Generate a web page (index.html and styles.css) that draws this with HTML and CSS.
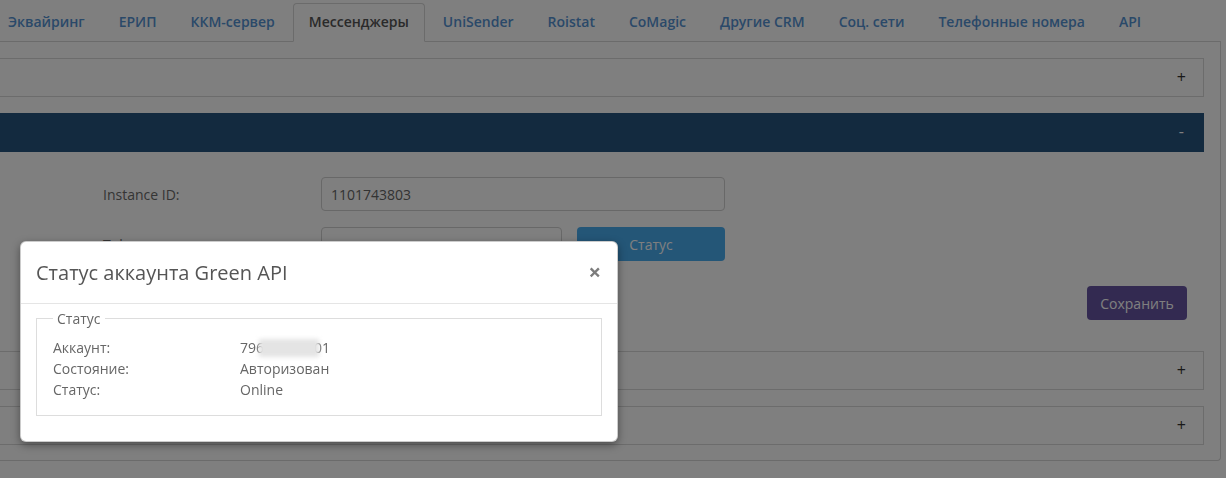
FILE: index.html
```html
<!DOCTYPE html>
<html lang="ru">
<head>
    <meta charset="UTF-8">
    <meta name="viewport" content="width=device-width, initial-scale=1.0">
    <title>Мессенджеры</title>
    <link rel="stylesheet" href="styles.css">
</head>
<body>
    <div class="page">
        <ul class="nav-tabs">
            <li class="tab">Эквайринг</li>
            <li class="tab">ЕРИП</li>
            <li class="tab">ККМ-сервер</li>
            <li class="tab active">Мессенджеры</li>
            <li class="tab">UniSender</li>
            <li class="tab">Roistat</li>
            <li class="tab">CoMagic</li>
            <li class="tab">Другие CRM</li>
            <li class="tab">Соц. сети</li>
            <li class="tab">Телефонные номера</li>
            <li class="tab">API</li>
        </ul>

        <div class="tab-content">
            <div class="panel">
                <div class="panel-heading"><span class="toggle">+</span></div>
            </div>

            <div class="panel open">
                <div class="panel-heading"><span class="toggle">-</span></div>
                <div class="panel-body">
                    <div class="form-row">
                        <label class="form-label">Instance ID:</label>
                        <input class="form-input wide" type="text" value="1101743803">
                    </div>
                    <div class="form-row">
                        <label class="form-label">Token:</label>
                        <input class="form-input short" type="text" value="">
                        <button class="btn btn-status">Статус</button>
                    </div>
                    <div class="form-actions">
                        <button class="btn btn-save">Сохранить</button>
                    </div>
                </div>
            </div>

            <div class="panel">
                <div class="panel-heading"><span class="toggle">+</span></div>
            </div>

            <div class="panel">
                <div class="panel-heading"><span class="toggle">+</span></div>
            </div>
        </div>
    </div>

    <div class="backdrop"></div>

    <div class="modal">
        <div class="modal-header">
            <h4 class="modal-title">Статус аккаунта Green API</h4>
            <span class="close">&times;</span>
        </div>
        <div class="modal-body">
            <fieldset class="status-box">
                <legend>Статус</legend>
                <div class="status-row">
                    <span class="status-label">Аккаунт:</span>
                    <span class="status-value">796<span class="blur"></span>01</span>
                </div>
                <div class="status-row">
                    <span class="status-label">Состояние:</span>
                    <span class="status-value">Авторизован</span>
                </div>
                <div class="status-row">
                    <span class="status-label">Статус:</span>
                    <span class="status-value">Online</span>
                </div>
            </fieldset>
        </div>
    </div>
</body>
</html>
```

FILE: styles.css
```css
* {
    margin: 0;
    padding: 0;
    box-sizing: border-box;
}

body {
    font-family: 'Open Sans', 'Liberation Sans', sans-serif;
    font-size: 14px;
    color: #6e6e6e;
    background-color: #fff;
    width: 1226px;
    height: 478px;
    overflow: hidden;
}

.page {
    margin-left: -60px;
    width: 1281px;
    padding-top: 3px;
}

/* tabs */
.nav-tabs {
    list-style: none;
    display: flex;
    padding-left: 52px;
    border-bottom: 1px solid #d6d6d6;
}

.tab {
    padding: 9px 15px 10px;
    line-height: 18px;
    margin-right: 2px;
    margin-bottom: -1px;
    border: 1px solid transparent;
    border-radius: 4px 4px 0 0;
    font-weight: 600;
    color: #5592d2;
    white-space: nowrap;
}

.tab.active {
    color: #555;
    background-color: #fff;
    border-color: #d6d6d6;
    border-bottom-color: #fff;
}

.tab-content {
    border: 1px solid #d6d6d6;
    border-top: none;
    border-radius: 0 0 4px 4px;
    padding: 16px 16px 15px;
}

/* panels */
.panel {
    border: 1px solid #d8d8d8;
    margin-bottom: 16px;
}

.panel:last-child {
    margin-bottom: 0;
}

.panel-heading {
    display: flex;
    justify-content: flex-end;
    padding: 9px 17px 9px 16px;
    line-height: 19px;
    color: #333;
}

.toggle {
    font-size: 16px;
}

.panel.open {
    border: none;
}

.panel.open .panel-heading {
    background-color: #26547f;
    color: #fff;
    height: 39px;
    padding-right: 20px;
}

.panel-body {
    padding: 25px 17px 15px 146px;
}

.form-row {
    display: flex;
    align-items: center;
    margin-bottom: 16px;
}

.form-label {
    width: 218px;
    color: #6a6a6a;
}

.form-input {
    height: 34px;
    padding: 0 9px;
    border: 1px solid #d0d0d0;
    border-radius: 4px;
    font-family: inherit;
    font-size: 14px;
    color: #666;
    background-color: #fff;
}

.form-input.wide {
    width: 404px;
}

.form-input.short {
    width: 241px;
}

.btn {
    height: 34px;
    border: none;
    border-radius: 4px;
    font-family: inherit;
    font-size: 14px;
    color: #fff;
    cursor: pointer;
}

.btn-status {
    width: 148px;
    margin-left: 15px;
    background-color: #48acef;
}

.form-actions {
    display: flex;
    justify-content: flex-end;
    margin-top: 25px;
}

.btn-save {
    width: 100px;
    background-color: #6654a2;
}

/* modal */
.backdrop {
    position: fixed;
    top: 0;
    left: 0;
    right: 0;
    bottom: 0;
    background-color: rgba(0, 0, 0, 0.5);
}

.modal {
    position: absolute;
    left: 20px;
    top: 241px;
    width: 598px;
    height: 201px;
    background-color: #fff;
    border: 1px solid rgba(0, 0, 0, 0.2);
    border-radius: 6px;
    box-shadow: 0 3px 9px rgba(0, 0, 0, 0.4);
}

.modal-header {
    display: flex;
    justify-content: space-between;
    align-items: center;
    padding: 15px 14px 15px 15px;
    height: 62px;
    border-bottom: 1px solid #e5e5e5;
}

.modal-title {
    font-size: 20px;
    font-weight: 400;
    color: #555;
}

.close {
    font-size: 22px;
    font-weight: 700;
    color: #7c7c7c;
    line-height: 1;
    margin-top: -4px;
    margin-right: 2px;
}

.modal-body {
    padding: 4px 15px 24px;
}

.status-box {
    border: 1px solid #ddd;
    padding: 8px 16px 15px;
}

.status-box legend {
    padding: 0 4px;
    line-height: 21px;
    color: #666;
}

.status-row {
    display: flex;
    line-height: 21px;
    color: #666;
}

.status-label {
    width: 187px;
}

.blur {
    position: relative;
    display: inline-block;
    width: 60px;
    height: 18px;
    margin: 0 -5px;
    vertical-align: -4px;
    background-color: #e4e4e4;
    filter: blur(2px);
}
```
